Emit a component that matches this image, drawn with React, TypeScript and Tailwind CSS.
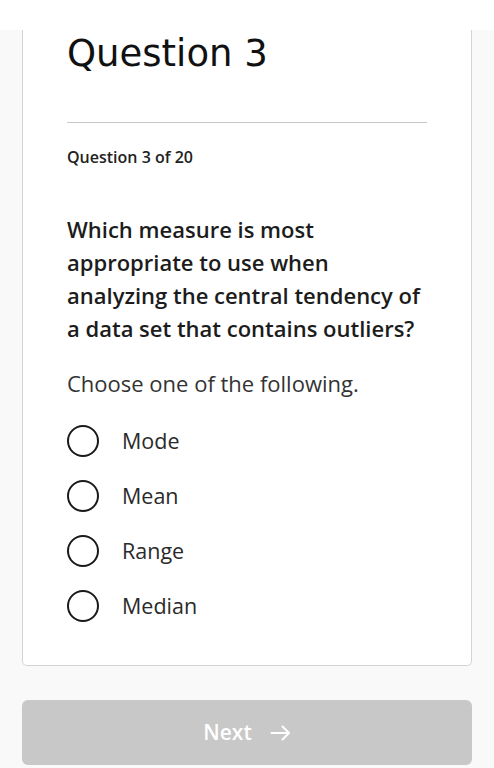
import { useState } from 'react';

const options = ['Mode', 'Mean', 'Range', 'Median'];

function ArrowIcon() {
  return (
    <svg width="21" height="16" viewBox="0 0 21 16" fill="none" stroke="currentColor" strokeWidth="2" strokeLinecap="round" strokeLinejoin="round" aria-hidden="true">
      <path d="M1.5 8h17" />
      <path d="M12.5 1.5 19 8l-6.5 6.5" />
    </svg>
  );
}

export default function App() {
  const [selected, setSelected] = useState<string | null>(null);

  return (
    <div className="min-h-[768px] bg-[#f9f9f9] font-['Open_Sans',sans-serif] text-[#1f1f1f]">
      <div className="h-[30px] bg-white" />

      <div className="mx-[22px] rounded-b-[5px] border-x border-b border-[#d3d3d3] bg-white px-11 pb-[43px] pt-[2px]">
        <h1 className="font-['DejaVu_Sans',sans-serif] text-[37px] font-normal leading-[44px] text-[#111]">Question 3</h1>

        <div className="mt-[46px] h-px bg-[#c8c8c8]" />

        <p className="mt-[22px] text-[16px] font-semibold leading-6 text-[#222]">Question 3 of 20</p>

        <h2 className="mt-[44px] text-[22px] font-semibold leading-[33px] text-[#1c1c1c]">
          Which measure is most appropriate to use when analyzing the central tendency of a data set that contains outliers?
        </h2>

        <p className="mt-[22px] text-[22px] leading-[33px] text-[#333]">Choose one of the following.</p>

        <div className="mt-[24px] flex flex-col gap-[22px]">
          {options.map((option) => (
            <label key={option} className="flex cursor-pointer items-center gap-[23px]" onClick={() => setSelected(option)}>
              <span className="flex h-[32px] w-[32px] shrink-0 items-center justify-center rounded-full border-[2.5px] border-[#1a1a1a]">
                {selected === option && <span className="h-[14px] w-[14px] rounded-full bg-[#1a1a1a]" />}
              </span>
              <span className="text-[21.5px] leading-[33px] text-[#2a2a2a]">{option}</span>
            </label>
          ))}
        </div>
      </div>

      <div className="mx-[22px] mt-[34px]">
        <button
          type="button"
          disabled={!selected}
          className="flex h-[65px] w-full items-center justify-center gap-[18px] rounded-[6px] bg-[#c8c8c8] text-[21px] font-semibold text-white"
        >
          <span>Next</span>
          <ArrowIcon />
        </button>
      </div>
    </div>
  );
}
